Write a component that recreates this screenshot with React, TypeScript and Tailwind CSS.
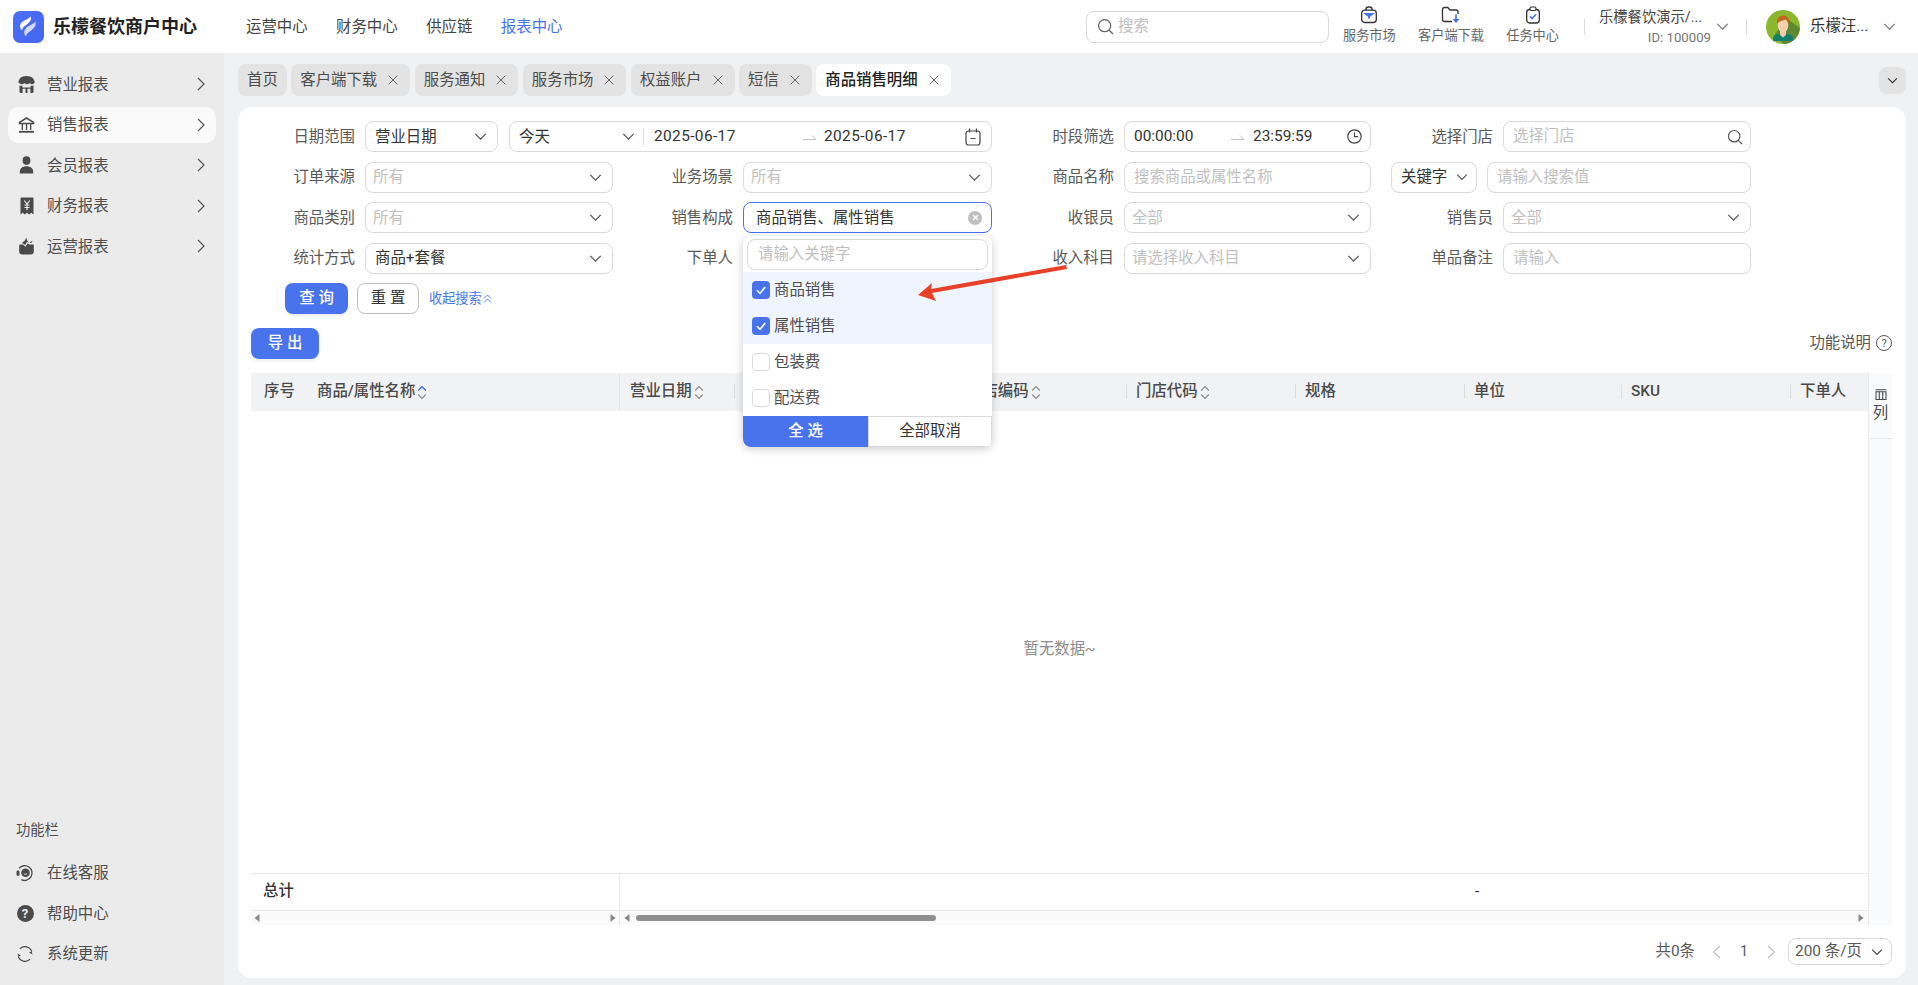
import React from "react";

const Chevron = ({ className = "", color = "#555", size = 13 }: { className?: string; color?: string; size?: number }) => (
  <svg width={size} height={size} viewBox="0 0 12 12" fill="none" className={"shrink-0 " + className}>
    <path d="M1.2 3.6 6 8.4l4.8-4.8" stroke={color} strokeWidth="1.2" />
  </svg>
);

const ChevronRight = () => (
  <svg width="8" height="14" viewBox="0 0 8 14" fill="none" className="shrink-0">
    <path d="M1 1l6 6-6 6" stroke="#555" strokeWidth="1.2" />
  </svg>
);

const X = () => (
  <svg width="10" height="10" viewBox="0 0 10 10" className="shrink-0">
    <path d="M.7.7l8.6 8.6M9.3.7.7 9.3" stroke="#666" strokeWidth="1" />
  </svg>
);

const RangeArrow = () => (
  <svg width="14" height="8" viewBox="0 0 14 8" fill="none" className="shrink-0">
    <path d="M0 6.5h13L9 2.5" stroke="#c4c4c4" strokeWidth="1" />
  </svg>
);

const Sorter = ({ active = false }: { active?: boolean }) => (
  <svg width="10" height="17" viewBox="0 0 10 17" fill="none" className="shrink-0">
    <path d="M1.2 6.500 5 2.500l3.800 4" stroke={active ? "#2f62ee" : "#8c8c8c"} strokeWidth="1.200" />
    <path d="M1.2 10.500 5 14.500l3.800-4" stroke="#8c8c8c" strokeWidth="1.200" />
  </svg>
);

const Logo = () => (
  <svg width="31" height="32" viewBox="0 0 31 32" className="shrink-0">
    <defs>
      <linearGradient id="lg" x1="0" y1="0" x2="1" y2="1">
        <stop offset="0" stopColor="#4d6ff5" />
        <stop offset="1" stopColor="#4466f0" />
      </linearGradient>
    </defs>
    <rect width="31" height="32" rx="7" fill="url(#lg)" />
    <path d="M17.500 5.500c1.300 3-.5 5.300-3.100 7.500-2.200 1.900-5 2.900-5.300 6.500C6.300 16.500 6.600 13 9.300 10.800 11.800 8.800 15.500 8.300 17.500 5.500z" fill="#fff" />
    <path d="M22.300 10.500c1.300 3.500-.7 6.200-3.500 8.400-2.400 1.900-5.100 3-5.800 6.600-2.700-3.200-2.100-6.700.7-9.100 2.700-2.300 6.700-2.800 8.600-5.900z" fill="#fff" fillOpacity="0.75" />
  </svg>
);

const iconFill = "#4a4a4a";

const ShopIcon = () => (
  <svg width="17" height="18" viewBox="0 0 17 18">
    <path d="M8.500 1c3.400 0 5.600 1 6.700 2.600l1.500 3.200c0 1.500-1.300 2.500-2.700 2.500-1 0-1.900-.5-2.400-1.200-.5.700-1.300 1.200-2.600 1.200s-2.100-.5-2.600-1.200c-.5.700-1.400 1.200-2.400 1.200C2.600 9.300.3 8.300.3 6.800l1.500-3.200C2.900 2 5.100 1 8.500 1z" fill={iconFill} />
    <path d="M1.500 10.600c.8.300 1.900.3 2.800 0v1.900h8.400v-1.900c.9.300 2 .3 2.800 0v6.200c0 .7-.5 1.200-1.200 1.200h-1.900v-4.200H9.500V18h-2v-4.200H4.600V18H2.700c-.7 0-1.200-.5-1.200-1.200z" fill={iconFill} />
  </svg>
);

const BankIcon = () => (
  <svg width="17" height="18" viewBox="0 0 17 18" fill="none" stroke={iconFill} strokeWidth="1.500">
    <path d="M1.500 6.300 8.500 2l7 4.300v1.200h-14z" />
    <path d="M4.300 8v6M8.500 8v6M12.700 8v6" strokeWidth="1.300" />
    <path d="M1 15.800h15" strokeWidth="1.800" />
  </svg>
);

const UserIcon = () => (
  <svg width="17" height="18" viewBox="0 0 17 18" fill={iconFill}>
    <ellipse cx="8.500" cy="4.600" rx="3.900" ry="4.300" />
    <path d="M1.800 17.500v-2c0-3.200 2.900-5.300 6.700-5.300s6.700 2.100 6.700 5.300v2z" />
  </svg>
);

const ReceiptIcon = () => (
  <svg width="14" height="18" viewBox="0 0 14 18">
    <path d="M.5 1.500C.5 1 1 .5 1.500.5h11c.5 0 1 .5 1 1v16l-2.200-1.800-2.100 1.800L7 15.700l-2.200 1.800-2.100-1.800L.5 17.500z" fill={iconFill} />
    <path d="M4.300 3.500 7 7l2.700-3.500M7 7v6M4.500 8h5M4.500 10.500h5" stroke="#ebebeb" strokeWidth="1.200" fill="none" />
  </svg>
);

const OpsIcon = () => (
  <svg width="17" height="18" viewBox="0 0 17 18">
    <path d="M1.200 8.500c0-.6.500-1 1-1h2.800l2.300 2.300L9.500 6.500l2.300 1h3c.6 0 1 .4 1 1v6.200c0 1.500-1.200 2.800-2.800 2.800H4c-1.600 0-2.800-1.300-2.800-2.800z" fill={iconFill} />
    <path d="M4 6 7.300 3 8 .5l1.600 3.700 1.700 1.800 3.200-2.500-1 2.600h-2.600L9 4.800 7.300 8z" fill={iconFill} />
  </svg>
);

const HeadsetIcon = () => (
  <svg width="18" height="18" viewBox="0 0 18 18" fill="none">
    <path d="M3 4.300A7.400 7.400 0 1 1 5.300 15.700" stroke={iconFill} strokeWidth="1.300" />
    <circle cx="9.500" cy="8.800" r="4.300" fill={iconFill} />
    <path d="M7.800 9.500c.6 1 2.600 1 3.300 0" stroke="#ebebeb" strokeWidth="1" />
    <rect x="0.500" y="6.500" width="3" height="5.500" rx="1.400" fill={iconFill} />
  </svg>
);

const HelpIcon = () => (
  <div className="w-[17px] h-[17px] rounded-full bg-[#4a4a4a] text-[#ebebeb] text-[13px] font-bold flex items-center justify-center leading-none">?</div>
);

const RefreshIcon = () => (
  <svg width="18" height="18" viewBox="0 0 18 18" fill="none" stroke={iconFill} strokeWidth="1.100">
    <path d="M3.800 3.800A7.300 7.300 0 0 1 15.800 6.500" />
    <path d="M14.200 14.200A7.300 7.300 0 0 1 2.200 11.500" />
    <path d="M16.500 9.500l-.9-3.300-2.600 1.300" fill={iconFill} stroke="none" />
    <path d="M1.500 8.500l.9 3.300 2.600-1.300" fill={iconFill} stroke="none" />
  </svg>
);

const MarketIcon = () => (
  <svg width="18" height="18" viewBox="0 0 18 18" fill="none">
    <path d="M6 4.500V3.200C6 1.900 7 1 8.300 1h1.400C11 1 12 1.900 12 3.200v1.300" stroke="#333" strokeWidth="1.300" />
    <rect x="1.700" y="4.200" width="14.600" height="12.300" rx="3" stroke="#333" strokeWidth="1.300" />
    <path d="M3 7h12L10 10.800v1.600H8v-1.600z" fill="#4873ed" />
  </svg>
);

const FolderIcon = () => (
  <svg width="20" height="18" viewBox="0 0 20 18" fill="none">
    <path d="M11 15.500H3.500c-1.200 0-2-.8-2-2v-10c0-1.200.8-2 2-2h3.300l2.200 2.500h6c1.200 0 2 .8 2 2v2" stroke="#333" strokeWidth="1.300" />
    <path d="M15 8.500v6" stroke="#4873ed" strokeWidth="1.700" />
    <path d="M11.500 13h7L15 17z" fill="#4873ed" />
  </svg>
);

const ClipboardIcon = () => (
  <svg width="16" height="18" viewBox="0 0 16 18" fill="none">
    <rect x="1.700" y="3.500" width="12.600" height="13.500" rx="3" stroke="#333" strokeWidth="1.300" />
    <rect x="5" y="1" width="6" height="3.500" rx="1.500" fill="#fff" stroke="#333" strokeWidth="1.200" />
    <path d="M4.800 10.300l2.300 2.300 4-4.300" stroke="#4873ed" strokeWidth="1.500" />
  </svg>
);

const Avatar = () => (
  <svg width="34" height="34" viewBox="0 0 34 34" className="shrink-0">
    <defs>
      <clipPath id="av"><circle cx="17" cy="17" r="17" /></clipPath>
    </defs>
    <g clipPath="url(#av)">
      <rect width="34" height="34" fill="#8bb72e" />
      <path d="M20 8 34 18v16H18L8 26z" fill="#5f8a30" />
      <path d="M7 31v-3c0-3 4-4.500 10-4.500s10 1.500 10 4.500v3z" fill="#12806a" />
      <path d="M14 20h6v5l-3 2.500-3-2.500z" fill="#f2c9a8" />
      <ellipse cx="17" cy="15.500" rx="5.200" ry="7" fill="#f4cfb0" />
      <path d="M11 14c-.8-5 2-8.500 6.300-8.500 4 0 6.500 3.300 5.700 8.500-.7-2.700-2-4-3.200-4.700-2.400 1.500-6.500 1.500-8.800 4.700z" fill="#c4661f" />
    </g>
  </svg>
);

const Tab = ({ label, closable = true, active = false }: { label: string; closable?: boolean; active?: boolean }) => (
  <div className={"h-[32px] rounded-[8px] flex items-center gap-[11px] text-[15.4px] pl-[9px] shrink-0 " + (closable ? "pr-[12px] " : "pr-[9px] ") + (active ? "bg-white text-[#222] font-medium" : "bg-[#e3e3e3] text-[#4d4d4d]")}>
    <span className="pt-[2px]">{label}</span>
    {closable && <X />}
  </div>
);

const SideItem = ({ icon, label, active = false }: { icon: React.ReactNode; label: string; active?: boolean }) => (
  <div className={"h-[36px] rounded-[10px] flex items-center pl-[10px] pr-[11px] " + (active ? "bg-[#fafafa]" : "")}>
    <div className="w-[17px] flex justify-center shrink-0">{icon}</div>
    <span className="ml-[12px] pt-[3px] flex-1 text-[15.4px] text-[#4d4d4d]">{label}</span>
    <ChevronRight />
  </div>
);

const FootItem = ({ icon, label }: { icon: React.ReactNode; label: string }) => (
  <div className="h-[36px] flex items-center pl-[16px]">
    <div className="w-[18px] flex justify-center shrink-0">{icon}</div>
    <span className="ml-[13px] pt-[2px] text-[15.4px] text-[#4d4d4d]">{label}</span>
  </div>
);

const TopIcon = ({ icon, label }: { icon: React.ReactNode; label: string }) => (
  <div className="flex flex-col items-center shrink-0">
    <div className="h-[18px] flex items-center">{icon}</div>
    <span className="mt-[1px] text-[13.2px] leading-[22px] text-[#666]">{label}</span>
  </div>
);

const Label = ({ children }: { children: React.ReactNode }) => (
  <div className="h-[31px] flex items-center justify-end pr-[10px] pt-[2px] text-[15.4px] text-[#595959] whitespace-nowrap">{children}</div>
);

const Select = ({ value, placeholder, className = "" }: { value?: string; placeholder?: string; className?: string }) => (
  <div className={"h-[31px] rounded-[8px] border border-[#d9d9d9] bg-white flex items-center justify-between pr-[10px] text-[15.4px] " + (value ? "pl-[9px] text-[#333] " : "pl-[7px] text-[#bfbfbf] ") + className}>
    <span className="whitespace-nowrap pt-[2px]">{value ?? placeholder}</span>
    <Chevron />
  </div>
);

const Input = ({ placeholder, className = "" }: { placeholder: string; className?: string }) => (
  <div className={"h-[31px] rounded-[8px] border border-[#d9d9d9] bg-white flex items-center pl-[9px] pt-[1px] text-[15.4px] text-[#bfbfbf] whitespace-nowrap " + className}>{placeholder}</div>
);

const SearchGlyph = ({ size = 17, color = "#666" }: { size?: number; color?: string }) => (
  <svg width={size} height={size} viewBox="0 0 16 16" fill="none" className="shrink-0">
    <circle cx="7.200" cy="7.200" r="5.700" stroke={color} strokeWidth="1.200" />
    <path d="M11.300 11.300 15 15" stroke={color} strokeWidth="1.200" />
  </svg>
);

const CheckBox = ({ checked = false }: { checked?: boolean }) => (
  <div className={"w-[18px] h-[18px] rounded-[4px] flex items-center justify-center shrink-0 " + (checked ? "bg-[#4873ed]" : "bg-white border border-[#d9d9d9]")}>
    {checked && (
      <svg width="12" height="12" viewBox="0 0 12 12" fill="none">
        <path d="M2 6.300 5 9.300 10.200 3" stroke="#fff" strokeWidth="1.600" />
      </svg>
    )}
  </div>
);

const Option = ({ label, checked = false }: { label: string; checked?: boolean }) => (
  <div className={"h-[36px] flex items-center pl-[9px] gap-[4px] text-[15.4px] text-[#4d4d4d] " + (checked ? "bg-[#eff5ff]" : "")}>
    <CheckBox checked={checked} />
    <span className="pt-[2px]">{label}</span>
  </div>
);

const Dropdown = () => (
  <div className="absolute left-0 top-[34px] w-[249px] h-[211px] z-20 bg-white rounded-[8px] shadow-[0_2px_10px_rgba(0,0,0,0.2)] overflow-hidden flex flex-col">
    <div className="px-[4px] pt-[3px] pb-[2px]">
      <Input placeholder="请输入关键字" className="w-full pl-[10px]" />
    </div>
    <Option label="商品销售" checked />
    <Option label="属性销售" checked />
    <Option label="包装费" />
    <Option label="配送费" />
    <div className="h-[31px] flex text-[15.4px]">
      <div className="w-[125px] bg-[#4873ed] text-white font-medium flex items-center justify-center pt-[1px]">全 选</div>
      <div className="flex-1 border border-[#d9d9d9] text-[#333] flex items-center justify-center pt-[1px]">全部取消</div>
    </div>
  </div>
);

const HCell = ({ w, children, first = false }: { w: number; children?: React.ReactNode; first?: boolean }) => (
  <div style={{ width: w }} className="h-full shrink-0 flex items-center relative pl-[10px] gap-[2px]">
    {!first && <span className="w-px h-[15px] bg-[#dcdcdc] absolute left-0 top-[11px]" />}
    {children}
  </div>
);

const Triangle = ({ dir }: { dir: "l" | "r" }) => (
  <svg width="6" height="8" viewBox="0 0 6 8" className="shrink-0">
    <path d={dir === "l" ? "M5.500 0v8L.5 4z" : "M.5 0v8l5-4z"} fill="#8a8a8a" />
  </svg>
);

export default function App() {
  return (
    <div className="relative w-[1918px] h-[985px] overflow-hidden flex flex-col bg-[#f0f1f2] font-['Roboto','Noto_Sans_CJK_SC',sans-serif]">
      {/* header */}
      <header className="h-[53px] shrink-0 bg-white flex items-center">
        <div className="ml-[13px] flex items-center">
          <Logo />
          <span className="ml-[9px] text-[18px] font-bold text-[#222] whitespace-nowrap">乐檬餐饮商户中心</span>
        </div>
        <nav className="ml-[49px] pt-[2px] flex items-center gap-[28.5px] text-[15.4px] text-[#444]">
          <span>运营中心</span>
          <span>财务中心</span>
          <span>供应链</span>
          <span className="text-[#4873ed]">报表中心</span>
        </nav>
        <div className="ml-auto w-[243px] h-[32px] rounded-[8px] border border-[#d9d9d9] flex items-center pl-[10px] gap-[4px]">
          <SearchGlyph />
          <span className="text-[15.4px] text-[#bfbfbf] pt-[1px]">搜索</span>
        </div>
        <div className="ml-[14px] w-[216px] shrink-0 flex justify-between">
          <TopIcon icon={<MarketIcon />} label="服务市场" />
          <TopIcon icon={<FolderIcon />} label="客户端下载" />
          <TopIcon icon={<ClipboardIcon />} label="任务中心" />
        </div>
        <span className="ml-[25px] w-px h-[16px] bg-[#d9d9d9] shrink-0" />
        <div className="ml-[14px] w-[112px] shrink-0 flex flex-col items-end pt-[2px]">
          <span className="text-[14.3px] leading-[20px] text-[#444] whitespace-nowrap self-start">乐檬餐饮演示/...</span>
          <span className="text-[13.2px] leading-[20px] text-[#777] mt-[1px]">ID: 100009</span>
        </div>
        <Chevron className="ml-[5px]" color="#777" />
        <span className="ml-[17px] w-px h-[16px] bg-[#d9d9d9] shrink-0" />
        <div className="ml-[19px] flex items-center shrink-0">
          <Avatar />
          <span className="ml-[10px] pt-[1px] text-[15.4px] text-[#333] w-[64px] whitespace-nowrap">乐檬汪...</span>
        </div>
        <Chevron className="ml-[9px] mr-[22px]" color="#777" />
      </header>

      <div className="flex-1 min-h-0 flex">
        {/* sidebar */}
        <aside className="w-[224px] shrink-0 bg-[#ebebeb] flex flex-col justify-between pt-[13px] pb-[13px]">
          <div className="px-[8px] flex flex-col gap-[4.5px]">
            <SideItem icon={<ShopIcon />} label="营业报表" />
            <SideItem icon={<BankIcon />} label="销售报表" active />
            <SideItem icon={<UserIcon />} label="会员报表" />
            <SideItem icon={<ReceiptIcon />} label="财务报表" />
            <SideItem icon={<OpsIcon />} label="运营报表" />
          </div>
          <div className="flex flex-col gap-[4.5px]">
            <div className="pl-[16px] text-[14.3px] leading-[20px] text-[#4d4d4d] mb-[11px]">功能栏</div>
            <FootItem icon={<HeadsetIcon />} label="在线客服" />
            <FootItem icon={<HelpIcon />} label="帮助中心" />
            <FootItem icon={<RefreshIcon />} label="系统更新" />
          </div>
        </aside>

        {/* main */}
        <main className="flex-1 min-w-0 flex flex-col pl-[14px] pr-[12px] pt-[11px] pb-[7px]">
          <div className="flex items-center gap-[4.5px] h-[32px] shrink-0">
            <Tab label="首页" closable={false} />
            <Tab label="客户端下载" />
            <Tab label="服务通知" />
            <Tab label="服务市场" />
            <Tab label="权益账户" />
            <Tab label="短信" />
            <Tab label="商品销售明细" active />
            <div className="ml-auto w-[27px] h-[27px] rounded-[8px] bg-[#e3e3e3] flex items-center justify-center">
              <Chevron size={11} color="#333" />
            </div>
          </div>

          <section className="mt-[11px] flex-1 min-h-0 bg-white rounded-[14px] flex flex-col pt-[14px]">
            {/* filters */}
            <div className="grid grid-cols-[127px_248px_130px_249px_132px_247px_132px_248px] gap-y-[9.5px] w-[1513px]">
              <Label>日期范围</Label>
              <div className="col-span-3 flex gap-[11px]">
                <Select value="营业日期" className="w-[133px]" />
                <div className="flex-1 h-[31px] rounded-[8px] border border-[#d9d9d9] flex items-center text-[15.4px] text-[#333]">
                  <span className="pl-[9px] pt-[2px] w-[112px]">今天</span>
                  <Chevron color="#555" />
                  <span className="ml-[8px] w-px h-[17px] bg-[#d9d9d9]" />
                  <span className="ml-[10px] pt-[1px] w-[149px] tracking-[0.4px]">2025-06-17</span>
                  <RangeArrow />
                  <span className="ml-[7px] pt-[1px] tracking-[0.4px]">2025-06-17</span>
                  <svg width="16" height="18" viewBox="0 0 16 18" fill="none" className="ml-auto mr-[10px]">
                    <rect x="1" y="3" width="14" height="14" rx="2.500" stroke="#444" strokeWidth="1.200" />
                    <path d="M4.500 .5v4M11.500 .5v4M5.500 10.500h5" stroke="#444" strokeWidth="1.200" />
                  </svg>
                </div>
              </div>
              <Label>时段筛选</Label>
              <div className="h-[31px] rounded-[8px] border border-[#d9d9d9] flex items-center text-[15.4px] text-[#333]">
                <span className="pl-[9px] pt-[1px] w-[106px]">00:00:00</span>
                <RangeArrow />
                <span className="ml-[8px] pt-[1px]">23:59:59</span>
                <svg width="15" height="15" viewBox="0 0 15 15" fill="none" className="ml-auto mr-[8px]">
                  <circle cx="7.500" cy="7.500" r="6.700" stroke="#444" strokeWidth="1.200" />
                  <path d="M7.500 3.500v4.200h3.500" stroke="#444" strokeWidth="1.200" />
                </svg>
              </div>
              <Label>选择门店</Label>
              <div className="h-[31px] rounded-[8px] border border-[#d9d9d9] flex items-center justify-between pl-[9px] pr-[7px] text-[15.4px] text-[#bfbfbf]">
                <span className="pt-[1px]">选择门店</span>
                <SearchGlyph size={16} color="#555" />
              </div>

              <Label>订单来源</Label>
              <Select placeholder="所有" />
              <Label>业务场景</Label>
              <Select placeholder="所有" />
              <Label>商品名称</Label>
              <Input placeholder="搜索商品或属性名称" />
              <div className="col-span-2 pl-[20px] flex gap-[10px]">
                <div className="w-[86px] h-[31px] rounded-[8px] border border-[#d9d9d9] flex items-center justify-between pl-[9px] pr-[8px] text-[15.4px] text-[#333] whitespace-nowrap">
                  <span className="pt-[1px]">关键字</span>
                  <Chevron size={12} />
                </div>
                <Input placeholder="请输入搜索值" className="flex-1" />
              </div>

              <Label>商品类别</Label>
              <Select placeholder="所有" />
              <Label>销售构成</Label>
              <div className="relative">
                <div className="h-[31px] rounded-[8px] border border-[#4873ed] flex items-center justify-between pl-[12px] pr-[9px] text-[15.4px] text-[#333]">
                  <span className="whitespace-nowrap pt-[2px]">商品销售、属性销售</span>
                  <span className="w-[14px] h-[14px] rounded-full bg-[#bfbfbf] flex items-center justify-center">
                    <svg width="7" height="7" viewBox="0 0 7 7"><path d="M1 1l5 5M6 1 1 6" stroke="#fff" strokeWidth="1.300" /></svg>
                  </span>
                </div>
                <Dropdown />
              </div>
              <Label>收银员</Label>
              <Select placeholder="全部" />
              <Label>销售员</Label>
              <Select placeholder="全部" />

              <Label>统计方式</Label>
              <Select value="商品+套餐" />
              <Label>下单人</Label>
              <Input placeholder="" />
              <Label>收入科目</Label>
              <Select placeholder="请选择收入科目" />
              <Label>单品备注</Label>
              <Input placeholder="请输入" />
            </div>

            {/* action buttons */}
            <div className="mt-[9.5px] pl-[47px] flex items-center shrink-0">
              <button className="w-[63px] h-[31px] rounded-[8px] bg-[#4873ed] text-white text-[15.4px] font-medium shadow-[0_2px_3px_rgba(0,0,0,0.08)]">查 询</button>
              <button className="ml-[9px] w-[62px] h-[31px] rounded-[8px] border border-[#bfbfbf] bg-white text-[#333] text-[15.4px]">重 置</button>
              <span className="ml-[10px] pt-[1px] text-[13.2px] text-[#4873ed] whitespace-nowrap">收起搜索</span>
              <svg width="9" height="10" viewBox="0 0 9 10" fill="none" className="ml-[1px]">
                <path d="M1 4.500 4.500 1 8 4.500M1 8.500 4.500 5 8 8.500" stroke="#4873ed" strokeWidth="0.900" />
              </svg>
            </div>

            {/* export */}
            <div className="mt-[14px] mx-[13px] h-[31px] shrink-0 flex items-center justify-between pr-[1px]">
              <button className="w-[68px] h-[31px] rounded-[8px] bg-[#4873ed] text-white text-[15.4px] font-medium shadow-[0_2px_3px_rgba(0,0,0,0.08)]">导 出</button>
              <div className="flex items-center gap-[5px] text-[15.4px] text-[#595959]">
                <span className="pt-[1px]">功能说明</span>
                <span className="w-[16px] h-[16px] rounded-full border border-[#595959] flex items-center justify-center text-[11px] leading-none">?</span>
              </div>
            </div>

            {/* table */}
            <div className="mt-[14px] ml-[13px] mr-[14px] flex h-[552px] shrink-0">
              <div className="w-[1618px] shrink-0 flex flex-col border-r border-[#e8e8e8] overflow-hidden">
                <div className="h-[38px] shrink-0 bg-[#f1f2f4] flex text-[15.4px] font-medium text-[#4a4a4a] whitespace-nowrap">
                  <div className="w-[369px] h-full shrink-0 flex items-center border-r border-[#e6e6e6]">
                    <span className="ml-[13px] w-[53px]">序号</span>
                    <span className="mr-[2px]">商品/属性名称</span>
                    <Sorter active />
                  </div>
                  <HCell w={114} first><span>营业日期</span><Sorter /></HCell>
                  <HCell w={223} />
                  <HCell w={169}><span>门店编码</span><Sorter /></HCell>
                  <HCell w={169}><span>门店代码</span><Sorter /></HCell>
                  <HCell w={169}><span>规格</span></HCell>
                  <HCell w={157}><span>单位</span></HCell>
                  <HCell w={169}><span>SKU</span></HCell>
                  <HCell w={79}><span>下单人</span></HCell>
                </div>
                <div className="flex-1 min-h-0 flex items-center justify-center pt-[16px] text-[15.4px] text-[#8c8c8c]">暂无数据~</div>
                <div className="h-[38px] shrink-0 border-y border-[#e8e8e8] flex items-center text-[15.4px] text-[#333]">
                  <div className="w-[369px] h-full shrink-0 flex items-center pl-[12px] font-medium border-r border-[#e8e8e8]">总计</div>
                  <div className="w-[855px] shrink-0" />
                  <span>-</span>
                </div>
                <div className="h-[14px] shrink-0 bg-[#fafafa] flex items-center">
                  <div className="w-[369px] h-full shrink-0 flex items-center justify-between px-[3px] border-r border-[#e8e8e8]">
                    <Triangle dir="l" />
                    <Triangle dir="r" />
                  </div>
                  <div className="flex-1 h-full flex items-center pl-[4px] pr-[4px]">
                    <Triangle dir="l" />
                    <div className="ml-[6px] w-[300px] h-[6px] rounded-full bg-[#8f8f8f]" />
                    <div className="ml-auto"><Triangle dir="r" /></div>
                  </div>
                </div>
              </div>
              <div className="flex-1 bg-[#f9fafb] flex flex-col">
                <div className="h-[66px] border-b border-[#e8e8e8] flex flex-col items-center pt-[16px] text-[15.4px] text-[#4a4a4a]">
                  <svg width="12" height="11" viewBox="0 0 12 11" fill="none" stroke="#4a4a4a" strokeWidth="1.100">
                    <path d="M.5.8h11M1 2.800h10v7.700H1zM4.300 3v7.500M7.700 3v7.500" />
                  </svg>
                  <span className="mt-[3px] leading-[20px]">列</span>
                </div>
              </div>
            </div>

            {/* pagination */}
            <div className="mt-[13px] mx-[14px] flex items-center justify-end text-[15.4px] text-[#595959]">
              <span>共0条</span>
              <svg width="9" height="14" viewBox="0 0 9 14" fill="none" className="ml-[17px]"><path d="M8 1 1.500 7 8 13" stroke="#bfbfbf" strokeWidth="1.100" /></svg>
              <span className="ml-[19px] text-[14.3px]">1</span>
              <svg width="9" height="14" viewBox="0 0 9 14" fill="none" className="ml-[19px]"><path d="M1 1l6.500 6L1 13" stroke="#bfbfbf" strokeWidth="1.100" /></svg>
              <div className="ml-[12px] w-[104px] h-[27px] rounded-[8px] border border-[#d9d9d9] flex items-center justify-between pl-[6px] pr-[8px]">
                <span className="whitespace-nowrap">200 条/页</span>
                <Chevron size={12} color="#444" />
              </div>
            </div>
          </section>
        </main>
      </div>

      {/* annotation arrow drawn over the screenshot */}
      <svg width="1918" height="985" viewBox="0 0 1918 985" className="absolute inset-0 pointer-events-none z-30">
        <path d="M1066 265 L1067 269 L932 293 L936 301 L918 295 L932 283 L931 289 Z" fill="#e8412a" />
      </svg>
    </div>
  );
}
